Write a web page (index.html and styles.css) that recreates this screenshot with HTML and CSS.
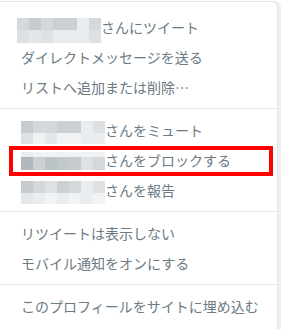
FILE: index.html
```html
<!DOCTYPE html>
<html lang="ja">

<head>
    <meta charset="UTF-8">
    <meta name="viewport" content="width=device-width, initial-scale=1.0">
    <title>user-actions-menu</title>
    <link rel="stylesheet" href="styles.css">
</head>

<body>
    <div class="menu">
        <ul class="group">
            <li class="item">
                <span class="blur first">
                    <i class="c1"></i><i class="c3"></i><i class="c1"></i><i class="c2"></i><i class="c2"></i><i class="c6"></i><i class="c1"></i>
                    <i class="c4"></i><i class="c5"></i><i class="c4"></i><i class="c6"></i><i class="c6"></i><i class="c6"></i><i class="c4"></i>
                </span>さんにツイート
            </li>
            <li class="item">ダイレクトメッセージを送る</li>
            <li class="item">リストへ追加または削除…</li>
        </ul>
        <div class="divider"></div>
        <ul class="group">
            <li class="item">
                <span class="blur">
                    <i class="c3"></i><i class="c1"></i><i class="c1"></i><i class="c2"></i><i class="c2"></i><i class="c6"></i><i class="c4"></i>
                    <i class="c4"></i><i class="c7"></i><i class="c5"></i><i class="c7"></i><i class="c7"></i><i class="c6"></i><i class="c6"></i>
                </span>さんをミュート
            </li>
            <li class="item marked">
                <span class="blur low">
                    <i class="c6"></i><i class="c7"></i><i class="c7"></i><i class="c7"></i><i class="c7"></i><i class="c7"></i><i class="c7"></i>
                    <i class="d1"></i><i class="c2"></i><i class="d2"></i><i class="d3"></i><i class="c3"></i><i class="c4"></i><i class="c1"></i>
                </span>さんをブロックする
            </li>
            <li class="item">
                <span class="blur">
                    <i class="c3"></i><i class="c1"></i><i class="c4"></i><i class="c2"></i><i class="c1"></i><i class="c6"></i><i class="c4"></i>
                    <i class="c5"></i><i class="c6"></i><i class="c7"></i><i class="c6"></i><i class="c7"></i><i class="c6"></i><i class="c7"></i>
                </span>さんを報告
            </li>
        </ul>
        <div class="divider"></div>
        <ul class="group">
            <li class="item">リツイートは表示しない</li>
            <li class="item">モバイル通知をオンにする</li>
        </ul>
        <div class="divider"></div>
        <ul class="group">
            <li class="item">このプロフィールをサイトに埋め込む</li>
        </ul>
    </div>
</body>

</html>
```

FILE: styles.css
```css
* {
    margin: 0;
    padding: 0;
    box-sizing: border-box;
}

body {
    background-color: #fff;
    font-family: "Noto Sans CJK JP", "Noto Sans", sans-serif;
    overflow: hidden;
}

.menu {
    margin: 1px 3px 0 -1px;
    padding: 10px 0 20px;
    background-color: #fff;
    border: 1px solid #dfe4e8;
    border-top-right-radius: 6px;
    box-shadow: 3px 0 0 #eef1f4;
}

.group {
    list-style: none;
}

.item {
    display: flex;
    align-items: center;
    height: 30px;
    padding-left: 21px;
    font-size: 14px;
    color: #6c7a84;
    white-space: nowrap;
    position: relative;
}

.divider {
    height: 1px;
    margin: 6px 0;
    background-color: #e6ecf0;
}

/* pixelated user name */
.blur {
    display: grid;
    grid-template-columns: repeat(7, 12px);
    grid-template-rows: 12px 11px;
    margin-top: 5px;
}

.blur.first {
    margin-left: -4px;
    margin-top: 7px;
    grid-template-rows: 12px 13px;
}

.blur.low {
    grid-template-rows: 5px 13px;
    margin-top: 2px;
}

.blur i {
    display: block;
}

.c1 { background-color: #d3d8db; }
.c2 { background-color: #cbd0d4; }
.c3 { background-color: #c5cbcf; }
.c4 { background-color: #dde1e4; }
.c5 { background-color: #e4e7ea; }
.c6 { background-color: #eaedef; }
.c7 { background-color: #f0f2f3; }
.d1 { background-color: #b1b9bf; }
.d2 { background-color: #bcc3c8; }
.d3 { background-color: #c2c8cc; }

/* red highlight frame */
.item.marked::after {
    content: '';
    position: absolute;
    top: 1px;
    bottom: -1px;
    left: 9px;
    right: 4px;
    border: 4px solid #ff0000;
}
```
